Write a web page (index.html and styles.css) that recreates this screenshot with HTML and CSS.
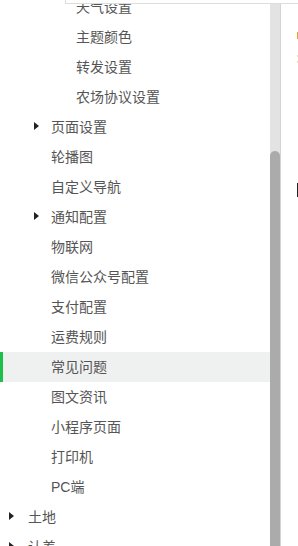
FILE: index.html
```html
<!DOCTYPE html>
<html lang="zh-CN">
<head>
  <meta charset="UTF-8" />
  <title>菜单</title>
  <link rel="stylesheet" href="styles.css">
</head>
<body>

<div class="page">
  <aside class="sidebar">
    <nav class="menu">
      <ul class="menu-list">
        <li class="item lvl3">天气设置</li>
        <li class="item lvl3">主题颜色</li>
        <li class="item lvl3">转发设置</li>
        <li class="item lvl3">农场协议设置</li>
        <li class="item lvl2 has-sub"><span class="caret"></span>页面设置</li>
        <li class="item lvl2">轮播图</li>
        <li class="item lvl2">自定义导航</li>
        <li class="item lvl2 has-sub"><span class="caret"></span>通知配置</li>
        <li class="item lvl2">物联网</li>
        <li class="item lvl2">微信公众号配置</li>
        <li class="item lvl2">支付配置</li>
        <li class="item lvl2">运费规则</li>
        <li class="item lvl2 active">常见问题</li>
        <li class="item lvl2">图文资讯</li>
        <li class="item lvl2">小程序页面</li>
        <li class="item lvl2">打印机</li>
        <li class="item lvl2">PC端</li>
        <li class="item lvl1 has-sub"><span class="caret"></span>土地</li>
        <li class="item lvl1 has-sub"><span class="caret"></span>认养</li>
      </ul>
    </nav>
    <div class="scrollbar"><div class="thumb"></div></div>
  </aside>

  <main class="content">
    <span class="mark orange"></span>
    <span class="mark faint"></span>
    <span class="mark faint second"></span>
    <span class="mark cursor"></span>
  </main>

  <div class="popover-edge"></div>
</div>

</body>
</html>
```

FILE: styles.css
```css
body {
  margin: 0;
  background: #fff;
  font-family: "Liberation Sans", "Noto Sans CJK SC", sans-serif;
  font-size: 14px;
  color: #555;
}
.page {
  position: relative;
  display: flex;
  width: 298px;
  height: 546px;
  overflow: hidden;
}
.sidebar {
  display: flex;
  width: 281px;
  height: 100%;
  border-right: 1px solid #d4d4d4;
  box-sizing: border-box;
}
.menu {
  width: 270px;
  height: 100%;
  overflow: hidden;
}
.menu-list {
  list-style: none;
  margin: -8px 0 0;
  padding: 0;
}
.item {
  display: flex;
  align-items: center;
  height: 30px;
  padding-bottom: 3px;
  box-sizing: border-box;
  white-space: nowrap;
}
.lvl1 { padding-left: 28px; }
.lvl2 { padding-left: 51px; }
.lvl3 { padding-left: 76px; }
.lvl1.has-sub { padding-left: 9px; }
.lvl2.has-sub { padding-left: 34px; }
.caret {
  width: 0;
  height: 0;
  border-left: 5px solid #222;
  border-top: 4px solid transparent;
  border-bottom: 4px solid transparent;
  margin-right: 12px;
}
.lvl1 .caret {
  margin-right: 14px;
}
.item.active {
  background: #eff1f0;
  box-shadow: inset 3px 0 0 #1fbf4b;
}
.scrollbar {
  width: 10px;
  height: 100%;
  background: #e3e3e3;
}
.thumb {
  margin-top: 151px;
  height: 400px;
  background: #ababab;
  border-radius: 5px 5px 0 0;
}
.content {
  flex: 1;
  display: flex;
  flex-direction: column;
  align-items: flex-end;
  padding-top: 32px;
}
.mark {
  display: block;
  width: 1px;
}
.orange {
  height: 7px;
  background: #e9a227;
}
.faint {
  height: 2px;
  margin-top: 16px;
  background: #f3dcae;
}
.faint.second {
  margin-top: 4px;
}
.cursor {
  height: 14px;
  margin-top: 120px;
  background: #222;
}
.popover-edge {
  position: absolute;
  top: -4px;
  left: 65px;
  right: 0;
  height: 7px;
  background: #fff;
  border-left: 1px solid #ddd;
  border-bottom: 1px solid #ddd;
}
```
